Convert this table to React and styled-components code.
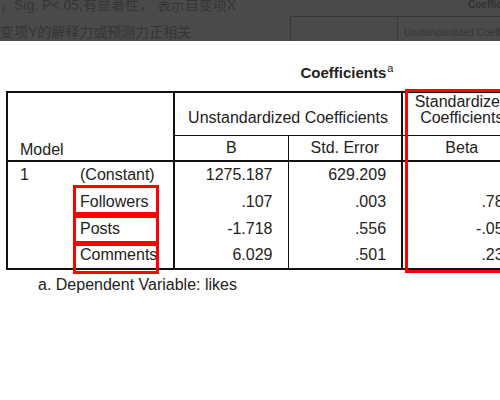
import React from 'react';
import styled, { createGlobalStyle } from 'styled-components';

const GlobalStyle = createGlobalStyle`
  html, body {
    margin: 0;
    padding: 0;
    background: #fff;
  }
  body {
    font-family: "Liberation Sans", Arial, "Noto Sans CJK SC", sans-serif;
  }
`;

const Page = styled.div`
  width: 500px;
  height: 400px;
  overflow: hidden;
  background: #fff;
  display: flex;
  flex-direction: column;
`;

/* dimmed strip at the top (page behind the overlay) */
const DimBand = styled.div`
  height: 41px;
  flex: none;
  background: #4a4a4a;
  display: flex;
  overflow: hidden;
`;

const NoteText = styled.div`
  width: 290px;
  flex: none;
  margin-top: -8px;
  font-family: "Liberation Sans", "Noto Sans CJK SC", sans-serif;
  font-size: 14px;
  line-height: 27px;
  color: #363636;
  white-space: nowrap;
`;

const MiniTable = styled.div`
  flex: 1;
  min-width: 0;
  display: flex;
  flex-direction: column;
`;

const MiniTitle = styled.div`
  height: 16px;
  padding-left: 178px;
  font-size: 10px;
  font-weight: bold;
  line-height: 10px;
  color: #333;
  white-space: nowrap;
`;

const MiniHead = styled.div`
  flex: 1;
  display: flex;
  border-top: 1.5px solid #383838;
  border-left: 1.5px solid #383838;
`;

const MiniCell = styled.div`
  width: ${(p) => p.$w}px;
  flex: none;
  border-right: 1px solid #383838;
  padding: 10px 0 0 6px;
  font-size: 10px;
  line-height: 12px;
  color: #363636;
  white-space: nowrap;
`;

const Main = styled.div`
  position: relative;
  flex: 1;
  padding-top: 22px;
  overflow: hidden;
`;

const Output = styled.div`
  width: 682px;
  margin-left: 6px;
  color: #222;
`;

const Title = styled.div`
  text-align: center;
  font-size: 15px;
  font-weight: bold;
  line-height: 20px;
  sup {
    font-size: 11px;
    font-weight: normal;
    vertical-align: 6px;
    line-height: 0;
    margin-left: 1px;
  }
`;

const Table = styled.table`
  width: 682px;
  margin-top: 8px;
  table-layout: fixed;
  border-collapse: collapse;
  border: 2px solid #111;
  font-size: 16px;
  color: #222;
`;

const HeadRow = styled.tr`
  height: ${(p) => p.$h}px;
`;

const Th = styled.th`
  font-weight: normal;
  text-align: ${(p) => p.$align || 'center'};
  vertical-align: ${(p) => p.$valign || 'bottom'};
  padding: 0 4px ${(p) => p.$pb || 0}px ${(p) => p.$pl || 4}px;
  line-height: ${(p) => p.$lh || 18}px;
  border-right: ${(p) => p.$right || 0}px solid #111;
  border-bottom: ${(p) => p.$bottom || 0}px solid #111;
  white-space: nowrap;
  overflow: hidden;
`;

const Row = styled.tr`
  height: 27px;
`;

const Td = styled.td`
  text-align: ${(p) => p.$align || 'right'};
  padding: 0 ${(p) => p.$pr ?? 15}px 0 ${(p) => p.$pl || 0}px;
  line-height: 18px;
  border-right: ${(p) => p.$right || 0}px solid #111;
  white-space: nowrap;
  overflow: hidden;
`;

const Footnote = styled.div`
  margin-top: 6px;
  padding-left: 32px;
  font-size: 16px;
  line-height: 18px;
`;

const Marker = styled.div`
  position: absolute;
  left: ${(p) => p.$x}px;
  top: ${(p) => p.$y}px;
  width: ${(p) => p.$w}px;
  height: ${(p) => p.$h}px;
  box-sizing: border-box;
  border: 3px solid #f00;
  pointer-events: none;
`;

const rows = [
  { model: '1', name: '(Constant)', b: '1275.187', se: '629.209', beta: '', t: '2.027', sig: '.043' },
  { model: '', name: 'Followers', b: '.107', se: '.003', beta: '.780', t: '35.291', sig: '.000' },
  { model: '', name: 'Posts', b: '-1.718', se: '.556', beta: '-.053', t: '-3.091', sig: '.002' },
  { model: '', name: 'Comments', b: '6.029', se: '.501', beta: '.230', t: '12.034', sig: '.000' },
];

export default function App() {
  return (
    <Page>
      <GlobalStyle />
      <DimBand>
        <NoteText>
          <div>，Sig. P&lt;.05,有显著性， 表示自变项X</div>
          <div>变项Y的解释力或预测力正相关</div>
        </NoteText>
        <MiniTable>
          <MiniTitle>Coefficients</MiniTitle>
          <MiniHead>
            <MiniCell $w={100} />
            <MiniCell $w={200}>Unstandardized Coefficients</MiniCell>
          </MiniHead>
        </MiniTable>
      </DimBand>

      <Main>
        <Output>
          <Title>
            Coefficients<sup>a</sup>
          </Title>
          <Table>
            <colgroup>
              <col style={{ width: 64 }} />
              <col style={{ width: 103 }} />
              <col style={{ width: 114 }} />
              <col style={{ width: 114 }} />
              <col style={{ width: 119 }} />
              <col style={{ width: 80 }} />
              <col style={{ width: 88 }} />
            </colgroup>
            <thead>
              <HeadRow $h={43}>
                <Th colSpan={2} rowSpan={2} $align="left" $pl={12} $pb={1} $right={2} $bottom={2}>
                  Model
                </Th>
                <Th colSpan={2} $pb={8} $right={2} $bottom={1}>
                  Unstandardized Coefficients
                </Th>
                <Th $pb={9} $lh={16} $right={1} $bottom={1}>
                  Standardized
                  <br />
                  Coefficients
                </Th>
                <Th rowSpan={2} $pb={4} $right={1} $bottom={2}>t</Th>
                <Th rowSpan={2} $pb={4} $bottom={2}>Sig.</Th>
              </HeadRow>
              <HeadRow $h={26}>
                <Th $valign="middle" $right={1} $bottom={2}>B</Th>
                <Th $valign="middle" $right={2} $bottom={2}>Std. Error</Th>
                <Th $valign="middle" $right={1} $bottom={2}>Beta</Th>
              </HeadRow>
            </thead>
            <tbody>
              {rows.map((r) => (
                <Row key={r.name}>
                  <Td $align="left" $pl={12}>{r.model}</Td>
                  <Td $align="left" $pl={9} $right={2}>{r.name}</Td>
                  <Td $right={1}>{r.b}</Td>
                  <Td $right={2}>{r.se}</Td>
                  <Td $right={1} $pr={8}>{r.beta}</Td>
                  <Td $right={1}>{r.t}</Td>
                  <Td>{r.sig}</Td>
                </Row>
              ))}
            </tbody>
          </Table>
          <Footnote>a. Dependent Variable: likes</Footnote>
        </Output>

        <Marker $x={73} $y={144} $w={86} $h={30} />
        <Marker $x={73} $y={174} $w={86} $h={29} />
        <Marker $x={73} $y={202} $w={86} $h={31} />
        <Marker $x={405} $y={48} $w={130} $h={184} />
      </Main>
    </Page>
  );
}
